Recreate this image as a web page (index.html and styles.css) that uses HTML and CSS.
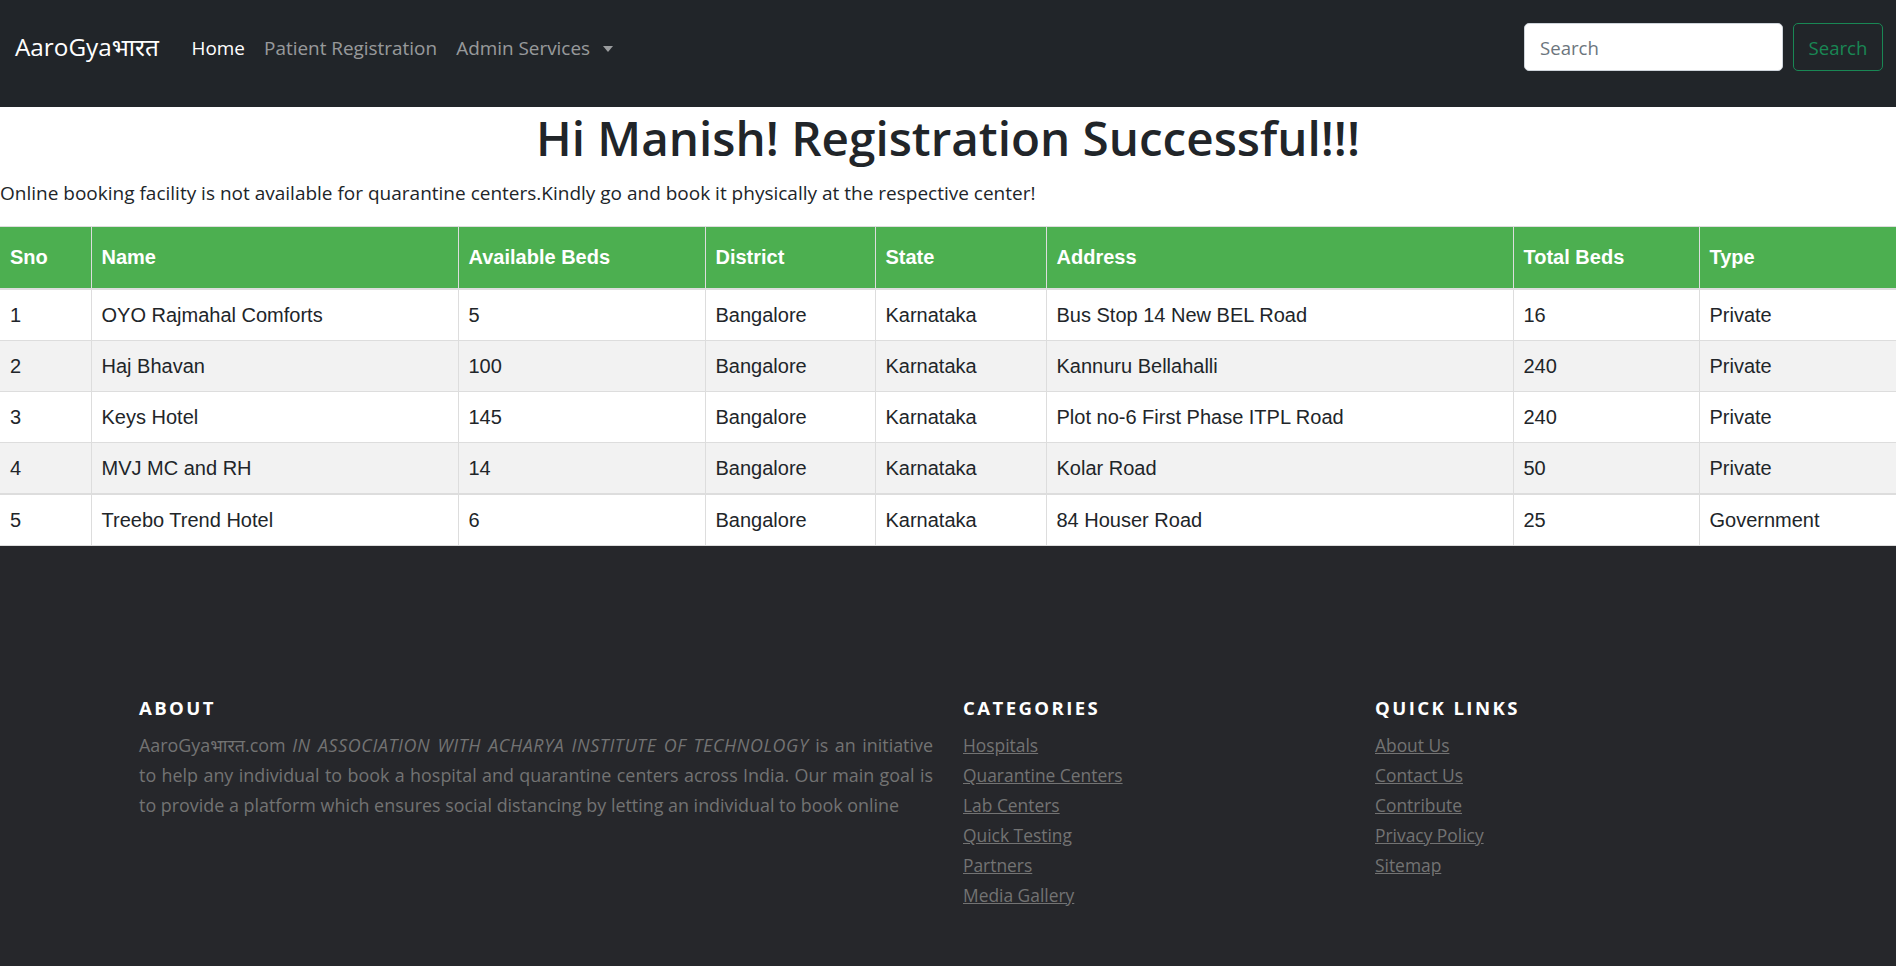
FILE: index.html
```html
<!DOCTYPE html>
<html lang="en">
<head>
<meta charset="utf-8">
<title>AaroGyaभारत</title>
<link rel="stylesheet" href="styles.css">
</head>
<body>
<nav class="navbar">
  <a class="brand" href="#">AaroGyaभारत</a>
  <ul class="nav-links">
    <li><a class="nav-link active" href="#">Home</a></li>
    <li><a class="nav-link" href="#">Patient Registration</a></li>
    <li><a class="nav-link dropdown-toggle" href="#">Admin Services</a></li>
  </ul>
  <form class="search">
    <input class="search-input" type="search" placeholder="Search">
    <button class="search-btn" type="button">Search</button>
  </form>
</nav>

<main>
  <h1 class="title">Hi Manish! Registration Successful!!!</h1>
  <p class="note">Online booking facility is not available for quarantine centers.Kindly go and book it physically at the respective center!</p>

  <table class="beds">
    <colgroup>
      <col class="c-sno"><col class="c-name"><col class="c-avail"><col class="c-district"><col class="c-state"><col class="c-address"><col class="c-total"><col class="c-type">
    </colgroup>
    <thead>
      <tr><th>Sno</th><th>Name</th><th>Available Beds</th><th>District</th><th>State</th><th>Address</th><th>Total Beds</th><th>Type</th></tr>
    </thead>
    <tbody>
      <tr><td>1</td><td>OYO Rajmahal Comforts</td><td>5</td><td>Bangalore</td><td>Karnataka</td><td>Bus Stop 14 New BEL Road</td><td>16</td><td>Private</td></tr>
      <tr><td>2</td><td>Haj Bhavan</td><td>100</td><td>Bangalore</td><td>Karnataka</td><td>Kannuru Bellahalli</td><td>240</td><td>Private</td></tr>
      <tr><td>3</td><td>Keys Hotel</td><td>145</td><td>Bangalore</td><td>Karnataka</td><td>Plot no-6 First Phase ITPL Road</td><td>240</td><td>Private</td></tr>
      <tr><td>4</td><td>MVJ MC and RH</td><td>14</td><td>Bangalore</td><td>Karnataka</td><td>Kolar Road</td><td>50</td><td>Private</td></tr>
    </tbody>
    <tbody class="second">
      <tr><td>5</td><td>Treebo Trend Hotel</td><td>6</td><td>Bangalore</td><td>Karnataka</td><td>84 Houser Road</td><td>25</td><td>Government</td></tr>
    </tbody>
  </table>
</main>

<footer class="site-footer">
  <div class="footer-grid">
    <div class="fcol">
      <h6 class="fhead">About</h6>
      <p class="about-text"><span class="jline">AaroGyaभारत.com <i class="assoc">IN ASSOCIATION WITH ACHARYA INSTITUTE OF TECHNOLOGY</i> is an initiative</span><span class="jline">to help any individual to book a hospital and quarantine centers across India. Our main goal is</span>to provide a platform which ensures social distancing by letting an individual to book online</p>
    </div>
    <div class="fcol">
      <h6 class="fhead">Categories</h6>
      <ul class="footer-links">
        <li><a href="#">Hospitals</a></li>
        <li><a href="#">Quarantine Centers</a></li>
        <li><a href="#">Lab Centers</a></li>
        <li><a href="#">Quick Testing</a></li>
        <li><a href="#">Partners</a></li>
        <li><a href="#">Media Gallery</a></li>
      </ul>
    </div>
    <div class="fcol">
      <h6 class="fhead">Quick Links</h6>
      <ul class="footer-links">
        <li><a href="#">About Us</a></li>
        <li><a href="#">Contact Us</a></li>
        <li><a href="#">Contribute</a></li>
        <li><a href="#">Privacy Policy</a></li>
        <li><a href="#">Sitemap</a></li>
      </ul>
    </div>
  </div>
</footer>
</body>
</html>
```

FILE: styles.css
```css
* { box-sizing: border-box; }

body {
  margin: 0;
  font-family: "Open Sans", "Noto Sans", "DejaVu Sans", sans-serif;
  color: #212529;
  background: #fff;
}

/* ---------- navbar ---------- */
.navbar {
  display: flex;
  align-items: center;
  background: #212529;
  padding: 23px 13px 36px 15px;
}
.brand {
  color: #fff;
  text-decoration: none;
  font-size: 24.3px;
  line-height: 36px;
  margin-right: 23px;
}
.nav-links {
  display: flex;
  list-style: none;
  margin: 0;
  padding: 0;
  flex: 1;
}
.nav-link {
  display: block;
  padding: 0 9.6px;
  font-size: 18.9px;
  line-height: 28.8px;
  color: rgba(255, 255, 255, 0.55);
  text-decoration: none;
  position: relative;
  top: 1px;
}
.nav-link.active { color: #fff; }
.dropdown-toggle::after {
  content: "";
  display: inline-block;
  margin-left: 13px;
  vertical-align: 3px;
  border-top: 6px solid rgba(255, 255, 255, 0.55);
  border-left: 5.5px solid transparent;
  border-right: 5.5px solid transparent;
}
.search {
  display: flex;
  align-items: center;
  gap: 10px;
}
.search-input {
  width: 259px;
  height: 48px;
  border: 1px solid #ced4da;
  border-radius: 5px;
  padding: 0 15px;
  font-family: inherit;
  font-size: 18.6px;
  color: #212529;
  background: #fff;
  outline: none;
}
.search-input::placeholder { color: #6c757d; }
.search-btn {
  width: 90px;
  height: 48px;
  border: 1px solid #198754;
  border-radius: 5px;
  background: transparent;
  color: #198754;
  font-family: inherit;
  font-size: 18.6px;
  padding: 0;
}

/* ---------- main ---------- */
.title {
  margin: 2px 0 12px;
  text-align: center;
  font-size: 47.6px;
  line-height: 57.6px;
  font-weight: 600;
  color: #212529;
}
.note {
  margin: 0 0 19px;
  font-size: 19px;
  line-height: 28.8px;
}

.beds {
  width: 100%;
  table-layout: fixed;
  border-collapse: collapse;
  font-family: "Liberation Sans", Arial, sans-serif;
  font-size: 20px;
  line-height: 23px;
  color: #212529;
}
.c-sno { width: 91px; }
.c-name { width: 367px; }
.c-avail { width: 247px; }
.c-district { width: 170px; }
.c-state { width: 171px; }
.c-address { width: 467px; }
.c-total { width: 186px; }
.beds th, .beds td {
  border: 1px solid #ddd;
  text-align: left;
  padding: 14px 10px 13px;
  white-space: nowrap;
  overflow: hidden;
}
.beds th {
  background: #4caf50;
  color: #fff;
  font-weight: bold;
  padding: 19px 10px 18.5px;
}
.beds tr > :first-child { border-left: 0; }
.beds tr > :last-child { border-right: 0; }
.beds thead th { border-bottom: 2px solid #ddd; }
.beds tbody tr:nth-child(even) td { background: #f2f2f2; }
.beds tbody.second td { border-top: 2px solid #ddd; background: #fff; }

/* ---------- footer ---------- */
.site-footer {
  background: #26272b;
  padding: 150px 0 62px;
  color: #737373;
}
.footer-grid {
  width: 1648px;
  margin: 0 auto;
  display: grid;
  grid-template-columns: 2fr 1fr 1fr;
}
.fcol { padding: 0 15px; }
.fhead {
  margin: 0 0 11px;
  color: #fff;
  font-size: 18.6px;
  line-height: 23px;
  font-weight: 700;
  letter-spacing: 2.4px;
  text-transform: uppercase;
}
.about-text {
  margin: 0;
  font-size: 17.9px;
  line-height: 30px;
  text-align: justify;
}
.jline {
  display: block;
  text-align-last: justify;
}
.assoc { letter-spacing: 0.6px; }
.footer-links {
  list-style: none;
  margin: 0;
  padding: 0;
  font-size: 17.4px;
  line-height: 30px;
}
.footer-links a {
  color: #737373;
  text-decoration: underline;
}
```
